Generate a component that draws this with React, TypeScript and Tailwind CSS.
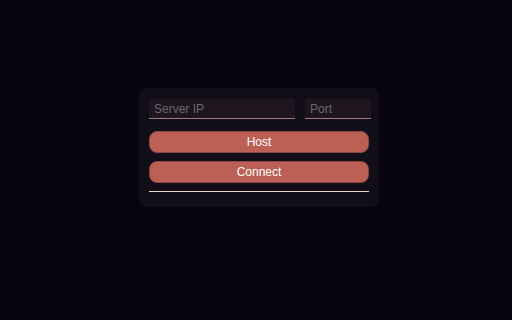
export default function App() {
  return (
    <div
      className="flex h-[320px] w-[512px] items-start justify-center bg-[#07030f] pt-[88px]"
      style={{ fontFamily: '"Liberation Sans", Arial, sans-serif' }}
    >
      <div className="ml-[6px] flex w-[240px] flex-col rounded-[8px] bg-[#110e19] pb-[15px] pl-[10px] pr-[8px] pt-[11px]">
        <div className="flex gap-[10px]">
          <input
            placeholder="Server IP"
            className="h-[20px] w-[146px] border-b border-[#a07a80] bg-[#1e151f] px-[5px] text-[12px] text-white outline-none placeholder:text-[#6c6570]"
          />
          <input
            placeholder="Port"
            className="h-[20px] w-[66px] border-b border-[#a07a80] bg-[#1e151f] px-[5px] text-[12px] text-white outline-none placeholder:text-[#6c6570]"
          />
        </div>
        <button className="mt-[12px] h-[22px] w-[220px] rounded-[8px] border border-[#8a4840] bg-[#bc5f55] text-[12px] text-white">
          Host
        </button>
        <button className="mt-[8px] h-[22px] w-[220px] rounded-[8px] border border-[#8a4840] bg-[#bc5f55] text-[12px] text-white">
          Connect
        </button>
        <div className="mt-[8px] h-px w-[220px] bg-[#eed8d0]" />
      </div>
    </div>
  );
}
